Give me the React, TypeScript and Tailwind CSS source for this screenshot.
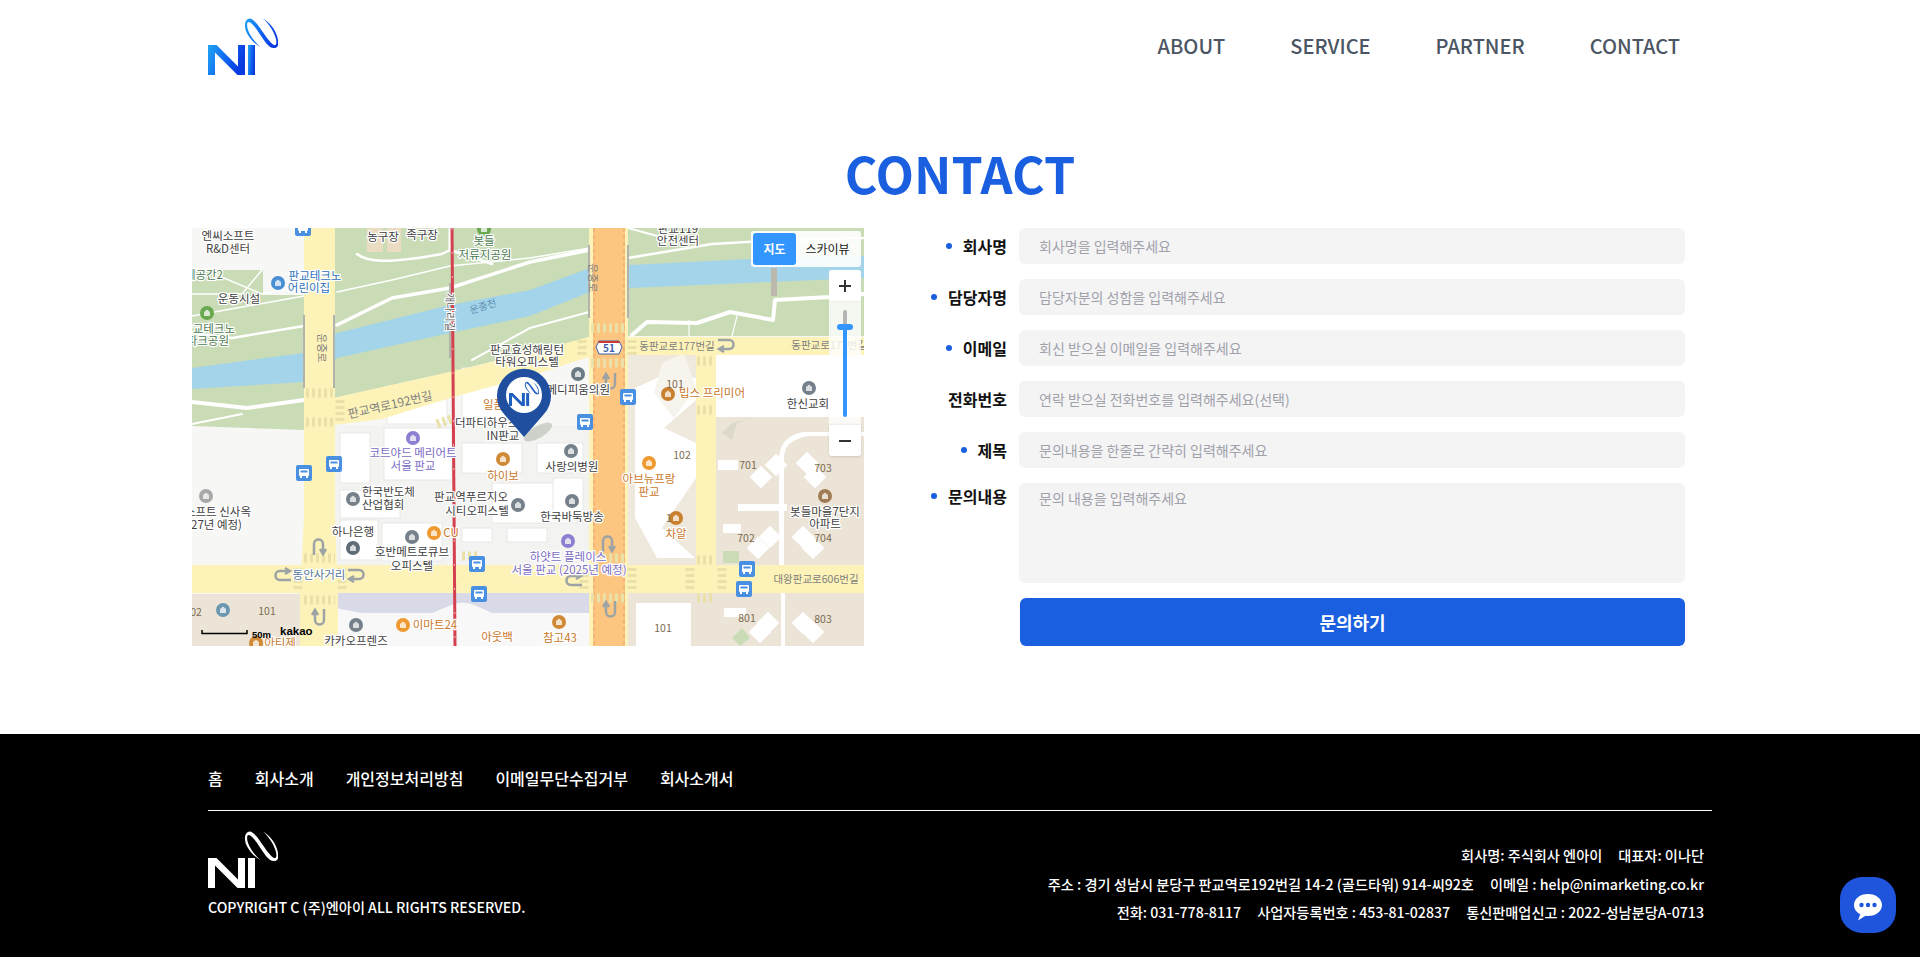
const navItems = ['ABOUT', 'SERVICE', 'PARTNER', 'CONTACT'];
const footerLinks = ['홈', '회사소개', '개인정보처리방침', '이메일무단수집거부', '회사소개서'];

const fields = [
  { label: '회사명', placeholder: '회사명을 입력해주세요', required: true },
  { label: '담당자명', placeholder: '담당자분의 성함을 입력해주세요', required: true },
  { label: '이메일', placeholder: '회신 받으실 이메일을 입력해주세요', required: true },
  { label: '전화번호', placeholder: '연락 받으실 전화번호를 입력해주세요(선택)', required: false },
  { label: '제목', placeholder: '문의내용을 한줄로 간략히 입력해주세요', required: true },
];

type Label = [number, number, string, string?, ('start' | 'middle' | 'end')?];

const DARK = '#404040';
const ORANGE = '#c9772b';
const PURPLE = '#7a6cc4';
const BLUE = '#2f72b8';
const GREEN = '#4b7b50';
const ROAD = '#7f7f7f';

const mapLabels: Label[] = [
  [36, 12, '엔씨소프트'],
  [36, 25, 'R&D센터'],
  [191, 13, '농구장'],
  [230, 11, '족구장'],
  [292, 17, '봇들', GREEN],
  [293, 31, '저류지공원', GREEN],
  [123, 52, '판교테크노', BLUE],
  [117, 64, '어린이집', BLUE],
  [31, 51, '휴게공간2', GREEN, 'end'],
  [47, 75, '운동시설'],
  [43, 105, '판교테크노', GREEN, 'end'],
  [37, 117, '파크공원', GREEN, 'end'],
  [335, 126, '판교효성해링턴'],
  [335, 138, '타워오피스텔'],
  [291, 181, '일품', ORANGE, 'start'],
  [263, 199, '더파티하우스', DARK, 'start'],
  [311, 212, 'IN판교'],
  [418, 166, '메디피움의원', DARK, 'end'],
  [486, 5, '판교119'],
  [486, 17, '안전센터'],
  [520, 169, '빕스 프리미어', ORANGE],
  [616, 180, '한신교회'],
  [221, 229, '코트야드 메리어트', PURPLE],
  [221, 242, '서울 판교', PURPLE],
  [311, 252, '하이보', ORANGE],
  [170, 268, '한국반도체', DARK, 'start'],
  [170, 281, '산업협회', DARK, 'start'],
  [279, 273, '판교역푸르지오'],
  [285, 287, '시티오피스텔'],
  [59, 288, '소프트 신사옥', DARK, 'end'],
  [50, 301, '(2027년 예정)', DARK, 'end'],
  [161, 308, '하나은행'],
  [259, 309, 'CU', ORANGE],
  [220, 328, '호반메트로큐브'],
  [220, 342, '오피스텔'],
  [127, 351, '동안사거리', '#55779a'],
  [164, 417, '카카오프렌즈'],
  [243, 401, '이마트24', ORANGE],
  [305, 413, '아웃백', ORANGE],
  [88, 419, '아티제', ORANGE],
  [376, 333, '하얏트 플레이스', PURPLE],
  [377, 346, '서울 판교 (2025년 예정)', PURPLE],
  [380, 243, '사랑의병원'],
  [380, 293, '한국바둑방송'],
  [457, 255, '아브뉴프랑', ORANGE],
  [457, 268, '판교', ORANGE],
  [484, 310, '차알', ORANGE],
  [633, 288, '봇들마을7단지'],
  [633, 300, '아파트'],
  [368, 414, '참고43', ORANGE],
];

const roadLabels: Label[] = [
  [485, 122, '동판교로177번길', ROAD],
  [637, 121, '동판교로177번길', ROAD],
  [624, 355, '대왕판교로606번길', ROAD],
];

const buildingNumbers: [number, number, string][] = [
  [483, 160, '101'],
  [490, 231, '102'],
  [556, 241, '701'],
  [631, 244, '703'],
  [554, 314, '702'],
  [631, 314, '704'],
  [555, 394, '801'],
  [631, 395, '803'],
  [471, 404, '101'],
  [75, 387, '101'],
  [4, 388, '02'],
  [477, 294, '1'],
];

const pois: [number, number, string][] = [
  [86, 55, '#4a8fd4'],
  [15, 85, '#6aa84f'],
  [292, 1, '#6aa84f'],
  [386, 146, '#6b7b85'],
  [476, 166, '#c9802f'],
  [617, 160, '#75808a'],
  [221, 210, '#8a7fd0'],
  [311, 231, '#d08a35'],
  [161, 271, '#75808a'],
  [326, 277, '#75808a'],
  [14, 268, '#a8a8a8'],
  [161, 320, '#5f6b75'],
  [242, 305, '#ee9a30'],
  [220, 309, '#75808a'],
  [31, 382, '#6b97b0'],
  [64, 415, '#d08a35'],
  [164, 397, '#75808a'],
  [211, 397, '#ee9a30'],
  [376, 313, '#8a7fd0'],
  [379, 223, '#75808a'],
  [380, 273, '#75808a'],
  [457, 235, '#ee9a30'],
  [484, 290, '#c9802f'],
  [633, 268, '#a07c55'],
  [367, 394, '#d08a35'],
];

const busStops: [number, number][] = [
  [111, 0],
  [436, 169],
  [393, 194],
  [142, 236],
  [112, 245],
  [285, 336],
  [287, 366],
  [555, 341],
  [552, 361],
];

const aptBlocks: [number, number][] = [
  [584, 237],
  [569, 249],
  [615, 235],
  [623, 249],
  [578, 309],
  [566, 320],
  [611, 309],
  [621, 320],
  [576, 395],
  [568, 404],
  [611, 395],
  [621, 404],
];

const uTurns: [number, number, number][] = [
  [127, 318, 0],
  [127, 390, 180],
  [90, 347, -90],
  [165, 347, 90],
  [418, 154, 180],
  [535, 117, 90],
  [416, 315, 0],
  [418, 382, 180],
  [381, 352, -90],
];

function NiLogo({ id, color }: { id: string; color?: string }) {
  const paint = color ?? `url(#${id})`;
  return (
    <svg viewBox="0 0 70 58" className="w-full h-full">
      <defs>
        <linearGradient id={id} x1="0" y1="0" x2="1" y2="0.3">
          <stop offset="0" stopColor="#20a4f3" />
          <stop offset="0.6" stopColor="#0f62f0" />
          <stop offset="1" stopColor="#0a3be0" />
        </linearGradient>
      </defs>
      <path d="M0 28h8.500L30 49.500V28h7v30h-7.500L7 35.500V58H0z" fill={paint} />
      <rect x="40" y="28" width="7" height="30" fill={paint} />
      <path
        d="M40 2C43 0 47 4 52 11C57 18 62 26 66 28C69 29 69 24 67 19C65 13 60 6 55 1.500C61 5 67 12 69 19C71 26 71 31 66 31C60 31 56 23 51 16C47 10 42 3 39.500 5.500C38 10 41 19 52 30C44 25 36 15 37 7C37.300 4.500 38.300 3 40 2Z"
        fill={paint}
      />
    </svg>
  );
}

function MapCanvas() {
  return (
    <svg viewBox="0 0 672 418" className="w-full h-full block font-['Noto_Sans_CJK_KR',sans-serif]">
      <rect width="672" height="418" fill="#f7f7f5" />

      {/* park */}
      <path d="M0 42H112V202L0 198Z" fill="#c9dcb6" />
      <path d="M143 0H397V110L258 144L143 170Z" fill="#c9dcb6" />
      <path d="M436 0H672V108H436Z" fill="#c9dcb6" />
      <rect x="175" y="0" width="16" height="24" fill="#e9dcc0" />
      <rect x="195" y="0" width="14" height="24" fill="#e9dcc0" />
      <rect x="71" y="42" width="41" height="25" fill="#f7f7f5" />

      {/* river */}
      <path
        d="M0 140L111 125L145 105L258 77L338 62L398 40L438 37L578 30L672 28V50L578 54L438 60L398 64L338 88L258 105L145 130L111 154L0 161Z"
        fill="#a4d4ea"
      />

      {/* park paths */}
      <g fill="none" stroke="#ffffff" strokeLinecap="round" strokeLinejoin="round">
        <path d="M145 97L200 70L258 60L338 34L398 22" strokeWidth="3.500" />
        <path d="M145 64L200 52L258 38L338 30L398 20" strokeWidth="1.500" />
        <path d="M165 26C175 34 195 36 250 26L258 22L300 36" strokeWidth="2.500" />
        <path d="M258 0V22" strokeWidth="3" />
        <path d="M0 174L55 180L112 172" strokeWidth="4" />
        <path d="M0 196L50 186" strokeWidth="2" />
        <path d="M0 66H50L70 42" strokeWidth="1.500" />
        <path d="M20 45L70 66L112 58" strokeWidth="1.500" />
        <path d="M0 105L40 110L112 98" strokeWidth="2.500" />
        <path d="M0 88L112 68" strokeWidth="1.500" />
        <path d="M440 107L455 94L505 95L538 84L581 92L583 72L638 69L672 66" strokeWidth="4" />
        <path d="M436 30L520 16L590 12L672 10" strokeWidth="2.500" />
        <path d="M436 0L480 12" strokeWidth="2" />
        <path d="M280 132L338 100L397 84" strokeWidth="2" />
        <path d="M497 92V108M545 88L540 108" strokeWidth="1.200" />
      </g>
      <rect x="579" y="40" width="6" height="28" fill="#bcb8ae" />

      {/* land blocks */}
      <rect x="436" y="127" width="68" height="212" fill="#efe8dc" />
      <rect x="524" y="127" width="148" height="62" fill="#ffffff" />
      <rect x="524" y="189" width="148" height="148" fill="#ece4d7" />
      <rect x="436" y="364" width="236" height="54" fill="#ece4d7" />
      <rect x="0" y="366" width="112" height="52" fill="#ece4d7" />
      <rect x="143" y="197" width="254" height="140" fill="#f3f3f2" />
      <rect x="143" y="364" width="254" height="54" fill="#f8f8f8" />
      <path d="M143 364H397V385H300C285 378 275 372 262 376L240 385H170L143 380Z" fill="#d8dae8" />

      {/* city blocks in the middle */}
      <g fill="#ffffff" stroke="#e8e8e6">
        <rect x="148" y="262" width="60" height="28" />
        <rect x="148" y="292" width="38" height="40" />
        <rect x="190" y="295" width="60" height="38" />
        <rect x="148" y="205" width="30" height="50" />
        <rect x="192" y="200" width="68" height="52" />
        <rect x="270" y="215" width="60" height="30" />
        <rect x="300" y="255" width="85" height="40" />
        <rect x="270" y="300" width="30" height="14" />
        <rect x="315" y="300" width="40" height="14" />
        <rect x="345" y="215" width="46" height="30" />
        <rect x="361" y="250" width="30" height="42" />
        <rect x="270" y="140" width="50" height="52" />
        <rect x="195" y="158" width="60" height="38" />
      </g>

      {/* white estate buildings */}
      <path
        d="M443 160L476 145L504 150V172L472 200L504 215V250L470 300L503 330H465L443 290Z"
        fill="#ffffff"
      />
      <path d="M470 135L492 125L504 160L482 190L462 165Z" fill="#f7f4ee" />
      <rect x="444" y="375" width="55" height="43" fill="#ffffff" />
      <g fill="#ffffff">
        {aptBlocks.map(([x, y], index) => (
          <rect key={index} x={x - 8} y={y - 8} width="16" height="16" transform={`rotate(45 ${x} ${y})`} />
        ))}
        <rect x="526" y="232" width="20" height="10" />
        <rect x="531" y="296" width="18" height="9" />
        <rect x="532" y="380" width="22" height="9" />
        <rect x="546" y="276" width="49" height="7" />
        <path d="M592 337V232C592 218 598 212 616 208H672V204H612C598 206 587 214 587 232V337Z" />
        <rect x="589" y="364" width="4" height="54" />
      </g>
      <rect x="531" y="323" width="16" height="12" fill="#c9dcb6" />
      <path d="M540 410L550 400L558 410L548 418Z" fill="#c9dcb6" />
      <path d="M540 212L545 195L560 190L540 195L530 205Z" fill="#dcd8ca" />

      {/* roads */}
      <g fill="#fdf3b8">
        <rect x="112" y="0" width="31" height="418" />
        <path d="M112 290L108 366V418H146V366L143 290Z" />
        <path d="M141 170L258 144L338 125L400 108V128L338 148L258 170L190 191L141 197Z" />
        <rect x="397" y="109" width="275" height="18" />
        <rect x="0" y="337" width="672" height="28" />
        <rect x="504" y="127" width="20" height="212" />
        <rect x="397" y="0" width="39" height="418" />
      </g>
      <rect x="401" y="0" width="32" height="418" fill="#fcc680" />
      <line x1="402" y1="0" x2="402" y2="418" stroke="#ef9f68" strokeDasharray="4 3" />
      <line x1="432" y1="0" x2="432" y2="418" stroke="#ef9f68" strokeDasharray="4 3" />

      {/* road edges over the river */}
      <g stroke="#b3b3ad" strokeWidth="2" fill="none">
        <path d="M112 87V160M142 87V160" />
        <path d="M397 17V90M436 17V90" />
        <path d="M258 55V130" />
      </g>

      {/* crosswalks */}
      <g stroke="#e9e1a8" strokeWidth="9" strokeDasharray="3 3" fill="none">
        <path d="M114 165H141M114 194H141" />
        <path d="M148 172V194" />
        <path d="M399 100H433M399 135H433" />
        <path d="M390 112V128M440 112V128" />
        <path d="M505 133H523M505 182H523" />
        <path d="M112 330H143M112 372H143" />
        <path d="M106 340V362M150 340V362" />
        <path d="M399 330H433M399 370H433" />
        <path d="M392 340V362M440 340V362" />
        <path d="M505 332H523M505 370H523" />
        <path d="M498 340V362M530 340V362" />
        <path d="M245 196L262 190" />
        <path d="M270 328H287" />
      </g>

      {/* railway */}
      <path d="M260 0L263 418" stroke="#d5404e" strokeWidth="3" />
      <path d="M260 0L263 418" stroke="#ffffff" strokeWidth="0.600" strokeDasharray="2 22" />

      {/* u-turn marks */}
      <g fill="none" stroke="#9da3a5" strokeWidth="2.500">
        {uTurns.map(([x, y, rotate], index) => (
          <g key={index} transform={`rotate(${rotate} ${x} ${y})`}>
            <path d={`M${x - 5} ${y + 9}V${y - 2}C${x - 5} ${y - 8} ${x + 4} ${y - 8} ${x + 4} ${y - 2}V${y + 6}`} />
            <path d={`M${x + 1} ${y + 3}L${x + 4} ${y + 8}L${x + 7} ${y + 3}`} />
          </g>
        ))}
      </g>

      {/* road shield */}
      <path d="M407 113H427L430 119L427 126H407L404 119Z" fill="#ffffff" stroke="#3c5fa8" />
      <path d="M407 113H427L428 115H406Z" fill="#c73b3b" />
      <text x="417" y="124" textAnchor="middle" fontSize="10" fontWeight="700" fill="#3c5fa8">
        51
      </text>

      {/* places */}
      {pois.map(([x, y, color], index) => (
        <g key={index}>
          <circle cx={x} cy={y} r="7" fill={color} />
          <path d={`M${x - 3} ${y + 3}V${y - 1}L${x} ${y - 3.500}L${x + 3} ${y - 1}V${y + 3}Z`} fill="#ffffff" opacity="0.75" />
        </g>
      ))}
      {busStops.map(([x, y], index) => (
        <g key={index}>
          <rect x={x - 8} y={y - 8} width="16" height="16" rx="2" fill="#4a90e2" />
          <rect x={x - 5} y={y - 4} width="10" height="7" rx="1" fill="#ffffff" />
          <rect x={x - 3.500} y={y - 2.500} width="7" height="2" fill="#4a90e2" />
          <rect x={x - 4} y={y + 3} width="2" height="2" fill="#ffffff" />
          <rect x={x + 2} y={y + 3} width="2" height="2" fill="#ffffff" />
        </g>
      ))}

      {/* labels */}
      <g stroke="#ffffff" strokeWidth="2.500" strokeLinejoin="round" className="[paint-order:stroke]" fontSize="11.500">
        {mapLabels.map(([x, y, text, color, anchor], index) => (
          <text key={index} x={x} y={y} fill={color ?? DARK} textAnchor={anchor ?? 'middle'}>
            {text}
          </text>
        ))}
      </g>
      <g fontSize="10.500">
        {roadLabels.map(([x, y, text, color], index) => (
          <text key={index} x={x} y={y} fill={color} textAnchor="middle">
            {text}
          </text>
        ))}
        <text x="198" y="181" fill={ROAD} textAnchor="middle" fontSize="12" transform="rotate(-13 198 177)">
          판교역로192번길
        </text>
        <text x="291" y="82" fill="#5d8fb2" textAnchor="middle" fontSize="10" transform="rotate(-18 291 78)">
          운중천
        </text>
        <text x="126" y="120" fill={ROAD} textAnchor="middle" transform="rotate(90 126 120)">
          운중로
        </text>
        <text x="401" y="54" fill={ROAD} textAnchor="middle" transform="rotate(90 401 50)">
          운중로
        </text>
        <text x="258" y="88" fill="#5f5f5f" textAnchor="middle" transform="rotate(90 258 84)" stroke="#ffffff" strokeWidth="2" className="[paint-order:stroke]">
          개나리길
        </text>
        {buildingNumbers.map(([x, y, text], index) => (
          <text key={index} x={x} y={y} fill="#7b6b50" textAnchor="middle">
            {text}
          </text>
        ))}
      </g>

      {/* scale bar */}
      <path d="M10 402V405.500H55V402" fill="none" stroke="#000000" strokeWidth="1.500" />
      <text x="60" y="410" fontSize="9.500" fontWeight="700" fill="#000000" className="font-['Liberation_Sans',sans-serif]">
        50m
      </text>
      <text x="88" y="407" fontSize="11.500" fontWeight="700" fill="#000000" className="font-['Liberation_Sans',sans-serif]">
        kakao
      </text>

      {/* pin */}
      <ellipse cx="346" cy="204" rx="16" ry="6" fill="#5b6b55" opacity="0.25" transform="rotate(-30 346 204)" />
      <path d="M332 209L312 186A27 27 0 1 1 352 186Z" fill="#1f4f9e" />
      <circle cx="332" cy="167" r="18" fill="#ffffff" />
      <svg x="317" y="153" width="30" height="25" viewBox="0 0 70 58">
        <path d="M0 28h8.500L30 49.500V28h7v30h-7.500L7 35.500V58H0z" fill="#1e5fc0" />
        <rect x="40" y="28" width="7" height="30" fill="#1e5fc0" />
        <path
          d="M40 2C43 0 47 4 52 11C57 18 62 26 66 28C69 29 69 24 67 19C65 13 60 6 55 1.500C61 5 67 12 69 19C71 26 71 31 66 31C60 31 56 23 51 16C47 10 42 3 39.500 5.500C38 10 41 19 52 30C44 25 36 15 37 7C37.300 4.500 38.300 3 40 2Z"
          fill="#1e5fc0"
        />
      </svg>
    </svg>
  );
}

function MapControls() {
  return (
    <>
      <div className="absolute left-[559px] top-[3px] w-[110px] h-[36px] bg-white/90 rounded-[3px] flex items-center p-[2px] text-[12px] text-[#222]">
        <span className="w-[43px] h-[32px] rounded-[3px] bg-[#3396ff] text-white font-bold flex items-center justify-center">
          지도
        </span>
        <span className="flex-1 text-center">스카이뷰</span>
      </div>
      <div className="absolute left-[637px] top-[42px] w-[32px] h-[186px] bg-white/80 rounded-[3px] flex flex-col items-center">
        <div className="h-[32px] w-full bg-white rounded-t-[3px] flex items-center justify-center border-b border-[#eee]">
          <span className="relative block w-[12px] h-[12px]">
            <span className="absolute left-0 top-[5px] w-[12px] h-[2px] bg-[#333]"></span>
            <span className="absolute left-[5px] top-0 w-[2px] h-[12px] bg-[#333]"></span>
          </span>
        </div>
        <div className="flex-1 relative w-full">
          <span className="absolute left-[14px] top-[8px] w-[4px] h-[18px] bg-[#b5b5b5] rounded-t"></span>
          <span className="absolute left-[14px] top-[25px] w-[4px] h-[90px] bg-[#3396ff] rounded-b"></span>
          <span className="absolute left-[8px] top-[22px] w-[16px] h-[6px] bg-[#3396ff] rounded-[3px]"></span>
        </div>
        <div className="h-[32px] w-full bg-white rounded-b-[3px] flex items-center justify-center border-t border-[#eee] shadow-sm">
          <span className="block w-[12px] h-[2px] bg-[#333]"></span>
        </div>
      </div>
    </>
  );
}

export default function App() {
  return (
    <div className="bg-white font-['Noto_Sans_CJK_KR','Noto_Sans',sans-serif] overflow-hidden">
      {/* Header */}
      <header className="h-[92px] flex items-start justify-between pl-[208px] pr-[240px]">
        <div className="w-[70px] h-[58px] mt-[17px]">
          <NiLogo id="header-logo" />
        </div>
        <nav className="flex gap-[65px] mt-[31px]">
          {navItems.map((item) => (
            <a key={item} className="text-[20px] leading-[30px] font-medium text-[#4b5563]">
              {item}
            </a>
          ))}
        </nav>
      </header>

      {/* Contact */}
      <main className="h-[642px]">
        <h1 className="h-[136px] text-center text-[50px] leading-[80px] pt-[40px] font-bold text-[#1a5fe0]">CONTACT</h1>
        <div className="flex justify-between pl-[192px] pr-[235px]">
          <div className="relative w-[672px] h-[418px] overflow-hidden">
            <MapCanvas />
            <MapControls />
          </div>

          <form className="w-[765px] flex flex-col gap-[15px]">
            {fields.map((field) => (
              <div key={field.label} className="flex items-center gap-[12px]">
                <label className="w-[87px] flex items-center justify-end text-[16px] font-bold text-[#111]">
                  {field.required && <span className="w-[6px] h-[6px] rounded-full bg-[#1a5fe0] mr-[11px]"></span>}
                  {field.label}
                </label>
                <input
                  placeholder={field.placeholder}
                  className="flex-1 h-[36px] rounded-[6px] bg-[#f4f4f5] px-[20px] text-[14px] placeholder:text-[#a1a1aa]"
                />
              </div>
            ))}
            <div className="flex items-start gap-[12px]">
              <label className="w-[87px] pt-[1px] flex items-center justify-end text-[16px] font-bold text-[#111]">
                <span className="w-[6px] h-[6px] rounded-full bg-[#1a5fe0] mr-[11px]"></span>
                문의내용
              </label>
              <textarea
                placeholder="문의 내용을 입력해주세요"
                className="flex-1 h-[100px] rounded-[6px] bg-[#f4f4f5] px-[20px] py-[5px] text-[14px] resize-none placeholder:text-[#a1a1aa]"
              />
            </div>
            <div className="pl-[100px]">
              <button type="button" className="w-full h-[48px] rounded-[6px] bg-[#1a5fe0] text-white text-[18px] font-bold">
                문의하기
              </button>
            </div>
          </form>
        </div>
      </main>

      {/* Footer */}
      <footer className="bg-black h-[223px] pl-[208px] pr-[208px] text-white">
        <div className="flex gap-[32px] h-[77px] items-center pt-[11px] border-b border-white text-[16px] font-medium">
          {footerLinks.map((link) => (
            <a key={link}>{link}</a>
          ))}
        </div>
        <div className="flex justify-between pt-[19px]">
          <div>
            <div className="w-[70px] h-[58px]">
              <NiLogo id="footer-logo" color="#ffffff" />
            </div>
            <p className="mt-[8px] text-[14.2px] leading-[22px] font-medium">COPYRIGHT C (주)엔아이 ALL RIGHTS RESERVED.</p>
          </div>
          <div className="pr-[8px] pt-[11px] text-right text-[14.2px] leading-[28.5px] font-medium">
            <p className="flex justify-end gap-[16px]">
              <span>회사명: 주식회사 엔아이</span>
              <span>대표자: 이나단</span>
            </p>
            <p className="flex justify-end gap-[16px]">
              <span>주소 : 경기 성남시 분당구 판교역로192번길 14-2 (골드타워) 914-씨92호</span>
              <span>이메일 : help@nimarketing.co.kr</span>
            </p>
            <p className="flex justify-end gap-[16px]">
              <span>전화: 031-778-8117</span>
              <span>사업자등록번호 : 453-81-02837</span>
              <span>통신판매업신고 : 2022-성남분당A-0713</span>
            </p>
          </div>
        </div>
      </footer>

      {/* Chat button */}
      <button type="button" className="fixed left-[1840px] top-[877px] w-[56px] h-[56px] rounded-[22px] bg-[#1f55dc] flex items-center justify-center">
        <svg viewBox="0 0 56 56" className="w-[56px] h-[56px]">
          <path d="M28 17C20 17 14 21.800 14 28C14 32 16.500 35.300 20.300 37.200L18 43.500L25.500 38.800C26.300 38.900 27.200 39 28 39C36 39 42 34.200 42 28C42 21.800 36 17 28 17Z" fill="#ffffff" />
          <circle cx="21.500" cy="28" r="2.200" fill="#1f55dc" />
          <circle cx="28" cy="28" r="2.200" fill="#1f55dc" />
          <circle cx="34.500" cy="28" r="2.200" fill="#1f55dc" />
        </svg>
      </button>
    </div>
  );
}
